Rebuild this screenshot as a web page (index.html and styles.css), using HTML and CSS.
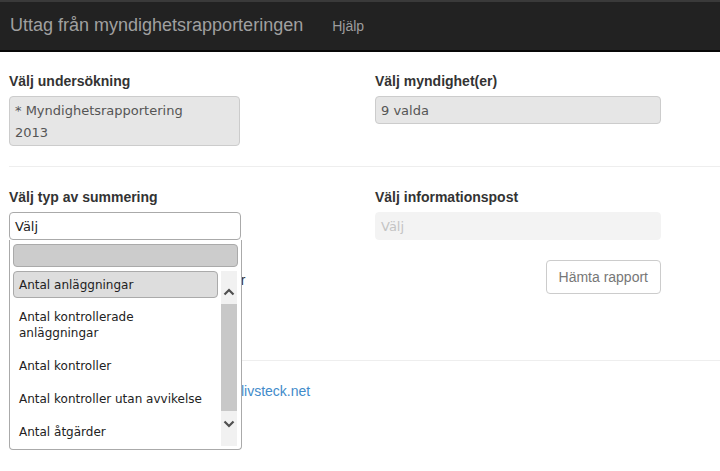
FILE: index.html
```html
<!DOCTYPE html>
<html lang="sv">
<head>
<meta charset="utf-8">
<title>Uttag från myndighetsrapporteringen</title>
<link rel="stylesheet" href="styles.css">
</head>
<body>
<header class="navbar">
  <span class="brand">Uttag från myndighetsrapporteringen</span>
  <a class="nav-link" href="#">Hjälp</a>
</header>
<main class="container">
  <div class="row">
    <div class="col col-left">
      <label class="label">Välj undersökning</label>
      <div class="box box-disabled box-survey">* Myndighetsrapportering 2013</div>
    </div>
    <div class="col col-right">
      <label class="label">Välj myndighet(er)</label>
      <div class="box box-disabled box-auth">9 valda</div>
    </div>
  </div>
  <hr class="divider">
  <div class="row">
    <div class="col col-left">
      <label class="label">Välj typ av summering</label>
      <div class="select-wrap">
        <div class="box box-select">Välj</div>
        <div class="dropdown">
          <div class="dd-search"></div>
          <div class="dd-body">
            <ul class="dd-list">
              <li class="dd-opt dd-active">Antal anläggningar</li>
              <li class="dd-opt">Antal kontrollerade anläggningar</li>
              <li class="dd-opt">Antal kontroller</li>
              <li class="dd-opt">Antal kontroller utan avvikelse</li>
              <li class="dd-opt">Antal åtgärder</li>
            </ul>
            <div class="dd-scroll">
              <span class="dd-arrow dd-up">
                <svg width="12" height="8" viewBox="0 0 12 8"><path d="M1.5 6.5 L6 2 L10.5 6.5" fill="none" stroke="#505050" stroke-width="2.2"/></svg>
              </span>
              <span class="dd-thumb"></span>
              <span class="dd-arrow dd-down">
                <svg width="12" height="8" viewBox="0 0 12 8"><path d="M1.5 1.5 L6 6 L10.5 1.5" fill="none" stroke="#505050" stroke-width="2.2"/></svg>
              </span>
            </div>
          </div>
        </div>
      </div>
    </div>
    <div class="col col-right">
      <label class="label">Välj informationspost</label>
      <div class="box box-off">Välj</div>
    </div>
  </div>
  <div class="row row-actions">
    <div class="col col-left">
      <p class="option-text">Visa summering per myndighet och år</p>
    </div>
    <div class="col col-right actions">
      <button class="btn" type="button" disabled>Hämta rapport</button>
    </div>
  </div>
  <hr class="divider divider-foot">
  <footer class="footer">Frågor? Kontakta <a href="#">support@livsteck.net</a></footer>
</main>
</body>
</html>
```

FILE: styles.css
```css
* { box-sizing: border-box; }
html, body { margin: 0; padding: 0; background: #fff; }
body {
  font-family: "Liberation Sans", Arial, sans-serif;
  font-size: 14px;
  color: #333;
  min-height: 471px;
}
.navbar {
  height: 52px;
  background: #222;
  border-top: 2px solid #3a3a3a;
  border-bottom: 2px solid #080808;
  display: flex;
  align-items: center;
  padding: 0 0 0 10px;
}
.brand {
  font-size: 18px;
  color: #a0a0a0;
  margin-top: -1px;
}
.nav-link {
  font-size: 14px;
  color: #9d9d9d;
  text-decoration: none;
  margin-left: 29px;
  margin-top: -1px;
}
.container { padding: 19px 0 0 9px; }
.row { display: flex; }
.col-left { width: 366px; }
.col-right { width: 286px; }
.label {
  display: block;
  font-weight: bold;
  font-size: 14px;
  line-height: 20px;
  color: #333;
  margin-bottom: 5px;
}
.box {
  font-family: "DejaVu Sans", Verdana, sans-serif;
  font-size: 13px;
  border: 1px solid #ccc;
  border-radius: 4px;
  padding: 5px 5px 3px 5px;
  line-height: 18px;
  height: 28px;
}
.box-disabled {
  background: #e6e6e6;
  color: #555;
}
.box-survey { width: 231px; line-height: 22px; padding: 3px 30px 1px 5px; height: 50px; }
.box-auth { width: 286px; }
.box-off {
  width: 286px;
  background: #f3f3f3;
  border-color: #f3f3f3;
  color: #c4c4c4;
}
.divider {
  border: 0;
  border-top: 1px solid #eee;
  margin: 20px 0 20px 0;
  height: 0;
}
.select-wrap { position: relative; width: 232px; }
.box-select { background: #fff; color: #222; border-color: #aaa; }
.dropdown {
  position: absolute;
  left: 0;
  top: 28px;
  width: 233px;
  height: 210px;
  background: #fff;
  border: 1px solid #aaa;
  border-top: 0;
  border-radius: 0 0 4px 4px;
  padding: 4px 3px 3px 3px;
  z-index: 10;
  display: flex;
  flex-direction: column;
  gap: 4px;
}
.dd-search {
  height: 23px;
  background: #ccc;
  border: 1px solid #aaa;
  border-radius: 4px;
  flex: none;
}
.dd-body { display: flex; flex: 1; overflow: hidden; gap: 3px; }
.dd-list {
  list-style: none;
  margin: 0;
  padding: 0;
  width: 205px;
  font-family: "DejaVu Sans", Verdana, sans-serif;
  font-size: 12px;
  color: #222;
}
.dd-opt {
  padding: 8px 6px 9px 6px;
  line-height: 16px;
}
.dd-active {
  background: #ddd;
  border: 1px solid #aaa;
  border-radius: 4px;
  padding: 5px 5px 4px 5px;
  margin-bottom: 3px;
}
.dd-scroll {
  width: 16px;
  background: #f1f1f1;
  display: flex;
  flex-direction: column;
  align-items: center;
}
.dd-arrow { display: flex; justify-content: center; flex: none; width: 16px; }
.dd-up { height: 33px; align-items: flex-end; padding-bottom: 8px; }
.dd-down { height: 35px; align-items: flex-start; padding-top: 9px; }
.dd-thumb { width: 16px; flex: 1; background: #c8c8c8; }
.row-actions { margin-top: 20px; }
.option-text { margin: 0; line-height: 20px; padding-top: 10px; padding-left: 1px; color: #333; }
.actions { display: flex; justify-content: flex-end; }
.btn {
  font-family: "Liberation Sans", Arial, sans-serif;
  font-size: 14px;
  height: 34px;
  padding: 0 12px;
  background: #fff;
  border: 1px solid #ccc;
  border-radius: 4px;
  color: #777;
}
.divider-foot { margin: 66px 0 20px 0; }
.footer { line-height: 20px; padding-left: 59px; color: #333; }
.footer a { color: #428bca; text-decoration: none; }
```
